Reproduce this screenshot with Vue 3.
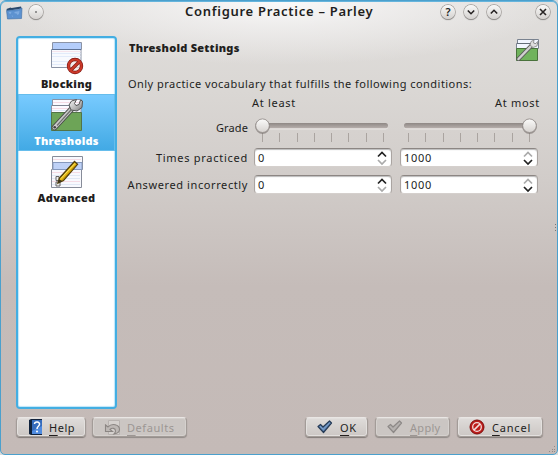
<script setup>
import { ref } from 'vue'

const pages = [
  { id: 'blocking', label: 'Blocking' },
  { id: 'thresholds', label: 'Thresholds' },
  { id: 'advanced', label: 'Advanced' },
]
const current = ref('thresholds')
const ticks = [8, 25, 43, 60, 77, 94, 112, 129]
const rows = [
  { id: 'times', label: 'Times practiced', low: 0, high: 1000 },
  { id: 'wrong', label: 'Answered incorrectly', low: 0, high: 1000 },
]
</script>

<template>
  <div class="backdrop">
    <div class="window">
      <header class="titlebar">
        <svg class="app-icon" width="17" height="14" viewBox="0 0 17 14">
          <path d="M.5 3l4-1.500 1 .5L15 .5l.5 2L1 5z" fill="#29486b" />
          <path d="M.5 4.500L12.500 3.500l3.500-1.500-.5 10.500-14 .5z" fill="#5d92d0" stroke="#3e6da5" stroke-width=".6" />
          <path d="M2.500 6l3-.3-.5 1.500-1 1zM8.500 6l5-1-.5 3-1.500 1-1-1.500-2-.3zM5.500 9.500l1.500.3-.5 1.500z" fill="#7eabe0" />
        </svg>
        <span class="round menu"><svg width="14" height="14" viewBox="0 0 14 14"><circle cx="7" cy="7" r="1" fill="#777" /></svg></span>
        <h1>Configure Practice – Parley</h1>
        <span class="round help">?</span>
        <span class="round down"><svg width="14" height="14" viewBox="0 0 14 14"><path d="M3.800 5.500L7 8.700l3.200-3.200" /></svg></span>
        <span class="round up"><svg width="14" height="14" viewBox="0 0 14 14"><path d="M3.800 8.500L7 5.300l3.200 3.200" /></svg></span>
        <span class="round close"><svg width="14" height="14" viewBox="0 0 14 14"><path d="M4 4l6 6M10 4l-6 6" /></svg></span>
      </header>

      <div class="body">
        <nav class="pages">
          <div v-for="p in pages" :key="p.id" class="page" :class="[p.id, { active: current === p.id }]" @click="current = p.id">
            <svg width="34" height="34" viewBox="0 0 34 34">
              <defs>
                <linearGradient id="metal" x1="0" y1="0" x2="1" y2="1">
                  <stop offset="0" stop-color="#fafafa" /><stop offset=".55" stop-color="#bbb" /><stop offset="1" stop-color="#777" />
                </linearGradient>
              </defs>
              <template v-if="p.id === 'blocking'">
                <path d="M2.500 1.500h29v7h-.5v18h-29.500v-18h1z" fill="#f8fafe" stroke="#8b93a5" />
                <path d="M3 2h28v6H3z" fill="#b4cdfa" />
                <path d="M2 8.500h29" stroke="#5e7295" />
                <path d="M2 12.500h28.500M2 15.500h28.500M2 20.500h28.500M2 23.500h28.500" stroke="#e2ebfa" />
                <path d="M2 10.500h28.500" stroke="#f5e4ec" />
                <circle cx="25" cy="25" r="6.500" fill="#f4e7e4" fill-opacity=".7" stroke="#7d1712" stroke-width="3.400" />
                <path d="M20.500 29.500l9-9" stroke="#7d1712" stroke-width="3.400" />
                <circle cx="25" cy="25" r="6.500" fill="none" stroke="#cb3929" stroke-width="2.200" />
                <path d="M20.500 29.500l9-9" stroke="#cb3929" stroke-width="2.200" />
              </template>
              <template v-else-if="p.id === 'thresholds'">
                <path d="M2.500 1.500h29v6h-.5v8h-29.500v-8h1z" fill="#fbfaff" stroke="#8b93a5" />
                <path d="M2 7.500h29" stroke="#7e8492" />
                <path d="M3 4.500h28M2 10.500h28" stroke="#f5dbe4" />
                <path d="M2 12.500h28" stroke="#dfe8f7" />
                <path d="M1.500 14.500h30v18h-30z" fill="#6da457" stroke="#527447" />
                <path d="M4.500 29.500L23 9.500" stroke="#4b4e4b" stroke-width="5.600" stroke-linecap="round" />
                <path d="M4.500 29.500L23 9.500" stroke="#c9cac9" stroke-width="4" stroke-linecap="round" />
                <path d="M26.500 1.500l-5 1.500-2.500 4 2 5 6 1 5-3.500.5-6.500-2-1-1.500 4.500-3 1-1.500-2z" fill="url(#metal)" stroke="#555" />
                <path d="M7 27.500L21 12" stroke="#6e706e" stroke-width="1.200" />
                <circle cx="4.700" cy="29.300" r="1.300" fill="#444" />
              </template>
              <template v-else>
                <path d="M2.500 1.500h30v13h-1v18h-30v-18h1z" fill="#f8f9fe" stroke="#878c99" />
                <path d="M3 7.500h29v7H3z" fill="#bfd2f7" stroke="#8599bd" />
                <path d="M3 4.500h28M2 17.500h28M2 26.500h28" stroke="#f5dbe4" />
                <path d="M2 20.500h28M2 23.500h28M2 29.500h28" stroke="#e0e8f5" />
                <path d="M6 21.500h3v4H6zM6 27h4v4H6z" fill="#eee" stroke="#666" />
                <path d="M9.500 23L24.500 6.500l3 2.800L13.500 25.500 8 28z" fill="#e4b913" stroke="#51400c" stroke-width="1.300" />
                <path d="M11 23.500L25 8.300" stroke="#fbe463" />
                <path d="M12.500 25L26.500 9.500" stroke="#b78905" />
                <path d="M8 28l1-3.500 3.500 1.500z" fill="#3b331d" />
              </template>
            </svg>
            <b>{{ p.label }}</b>
          </div>
        </nav>

        <main>
          <div class="heading">
            <h2>Threshold Settings</h2>
            <svg width="23" height="23" viewBox="0 0 23 23">
              <path d="M1.500.5h21v9h-22v-5h1z" fill="#f2f6ff" stroke="#7a8390" />
              <path d="M1 4.500h21" stroke="#646d78" />
              <path d="M.5 9.500h21v12H.5z" fill="#70b35c" stroke="#49723c" />
              <path d="M2.500 20L16 6" stroke="#5c5f5c" stroke-width="4" stroke-linecap="round" />
              <path d="M2.500 20L16 6" stroke="#d0d0d0" stroke-width="2.500" stroke-linecap="round" />
              <path d="M18 1l-3 1.500-1 3.500 3 2.500 4-1.500L22 2.500l-2.500 2-2-.5z" fill="#ddd" stroke="#777" stroke-width=".7" />
            </svg>
          </div>
          <p class="intro">Only practice vocabulary that fulfills the following conditions:</p>
          <div class="form">
            <span></span>
            <span class="col-head least">At least</span>
            <span class="col-head most">At most</span>

            <label class="grade">Grade</label>
            <svg v-for="x in [8.5, 129.5]" :key="x" class="slider" width="138" height="30" viewBox="0 0 138 30">
              <defs>
                <linearGradient id="groove" x1="0" y1="0" x2="0" y2="1"><stop offset="0" stop-color="#8e8784" /><stop offset="1" stop-color="#b7afac" /></linearGradient>
                <linearGradient id="knob" x1="0" y1="0" x2="0" y2="1"><stop offset="0" stop-color="#fbfbfa" /><stop offset="1" stop-color="#d6d2cf" /></linearGradient>
              </defs>
              <rect x="4" y="8" width="130" height="5.500" rx="2.700" fill="#e9e6e4" />
              <rect x="4" y="7" width="130" height="5.300" rx="2.600" fill="url(#groove)" />
              <path v-for="t in ticks" :key="t" :d="`M${t + .5} 17v9`" stroke="#aaa4a0" />
              <circle :cx="x" cy="10.500" r="7.400" fill="#77706d" fill-opacity=".6" />
              <circle :cx="x" cy="9.700" r="6.800" fill="url(#knob)" stroke="#928c89" stroke-width=".8" />
            </svg>

            <template v-for="r in rows" :key="r.id">
              <label :class="r.id">{{ r.label }}</label>
              <span v-for="(v, i) in [r.low, r.high]" :key="i" class="spin">
                <span>{{ v }}</span>
                <svg width="10" height="16" viewBox="0 0 10 16" fill="none" stroke-width="1.700">
                  <path d="M1 6.500l4-4 4 4" :stroke="i ? '#aaa' : '#222'" />
                  <path d="M1 10l4 4 4-4" :stroke="i ? '#222' : '#aaa'" />
                </svg>
              </span>
            </template>
          </div>
        </main>
      </div>

      <footer>
        <button class="btn b-help">
          <svg width="15" height="17" viewBox="0 0 15 17">
            <path d="M1 1l2-1h11v16H3l-2-1z" fill="#11233d" />
            <path d="M4 1h10v14H4z" fill="#4f8be0" /><path d="M4 1h10v6L4 12z" fill="#356cbd" />
            <path d="M6.500 5c.3-3 5.500-2.500 5 .5-.3 1.800-2.500 1.800-2.500 4.500" fill="none" stroke="#fff" stroke-width="1.500" />
            <circle cx="9" cy="12.500" r="1" fill="#fff" />
          </svg>
          <span><u>H</u>elp</span>
        </button>
        <button class="btn b-defaults" disabled>
          <svg width="17" height="17" viewBox="0 0 17 17">
            <path d="M4.500 1.500h11v14h-11z" fill="#d5d1ce" stroke="#b8b3b0" />
            <path d="M1.500 6v6.500H8.500L6 10.500c2-2 5.500-1.500 5.500 1.500 0 1-.5 2-1.500 3 3-.5 5.500-2 5.500-4.500C15.500 5 7.500 4 4 8z" fill="#bdb8b5" stroke="#8b8683" stroke-width="1.100" />
          </svg>
          <span><u>D</u>efaults</span>
        </button>
        <i class="spacer"></i>
        <button class="btn b-ok">
          <svg width="16" height="14" viewBox="0 0 16 14"><path d="M1 6.500L3.500 4.500 6 7l6.500-6L14.500 3 6.500 12.500z" fill="#6087b8" stroke="#263b56" stroke-width="1.200" stroke-linejoin="round" /><path d="M3 6.300l3.200 3L12.500 3" fill="none" stroke="#83a5ce" /></svg>
          <span><u>O</u>K</span>
        </button>
        <button class="btn b-apply" disabled>
          <svg width="16" height="14" viewBox="0 0 16 14"><path d="M1 6.500L3.500 4.500 6 7l6.500-6L14.500 3 6.500 12.500z" fill="#b5b1af" stroke="#8d8987" stroke-width="1.200" stroke-linejoin="round" /></svg>
          <span><u>A</u>pply</span>
        </button>
        <button class="btn b-cancel">
          <svg width="16" height="16" viewBox="0 0 16 16"><circle cx="8" cy="8" r="7" fill="#bd1d1b" stroke="#7f0e0d" /><circle cx="8" cy="8" r="4.300" fill="#bd1d1b" stroke="#f3dedc" stroke-width="1.300" /><path d="M5 11l6-6" stroke="#f3dedc" stroke-width="1.700" /></svg>
          <span><u>C</u>ancel</span>
        </button>
      </footer>
      <svg class="grip" width="7" height="7" viewBox="0 0 7 7" fill="#908987"><path d="M5 0h1v1H5zM3 3h1v1H3zM5 3h1v1H5zM0 5h1v1H0zM3 5h1v1H3zM5 5h1v1H5z" /></svg>
      <svg class="edge" width="2" height="9" viewBox="0 0 2 9" fill="#777"><path d="M0 0h1v1H0zM0 3h1v1H0zM0 6h1v1H0z" /></svg>
    </div>
  </div>
</template>

<style>
body { margin: 0; }
</style>

<style scoped>
* { box-sizing: border-box; }
.backdrop { width: 558px; height: 455px; background: #d9dbdc; font-family: "Noto Sans", "Open Sans", sans-serif; font-size: 11px; color: #221e1d; }
.window { position: relative; display: flex; flex-direction: column; width: 558px; height: 455px; border: 1px solid #4ba0cd; border-radius: 6px 6px 5px 5px; box-shadow: inset 0 1px #65b4dc; overflow: hidden;
  background: radial-gradient(ellipse 280px 64px at 50% 0, #fafafa 0, #f5f4f4aa 40%, #e2e0de00 100%), linear-gradient(#e1dfdd 0, #dad7d4 90px, #d1ccc9 180px, #c5bcb9 285px, #c4bab7 100%); }
.titlebar { display: flex; align-items: center; height: 20px; flex: none; padding: 0 7px 0 5px; }
.app-icon { margin-top: 3px; }
.round { display: grid; place-items: center; width: 14px; height: 14px; margin-top: 1px; flex: none; border-radius: 50%; background: linear-gradient(#f9f9f8, #d5d2d0); box-shadow: 0 0 0 .7px #9a9693, 0 1px 1px #777; font-size: 11px; font-weight: 600; line-height: 14px; }
.round svg path { fill: none; stroke: #292525; stroke-width: 1.600; }
.menu { margin-left: 6px; }
h1 { margin: 0; flex: 1; padding-left: 142px; font-size: 13px; font-weight: 600; white-space: nowrap; line-height: 20px; letter-spacing: .71px; }
.down, .up { margin-left: 9px; }
.close { margin-left: 35px; }
.body { display: flex; flex: none; height: 373px; margin-top: 15px; padding: 0 20px 0 15px; }
.pages { width: 101px; height: 373px; flex: none; border: 2px solid #43aee2; border-radius: 4px; background: #fff; box-shadow: inset 0 0 1px 1px #bde6fa; }
.page { display: flex; flex-direction: column; align-items: center; height: 57px; padding-top: 4px; white-space: nowrap; }
.page:first-child { height: 56px; padding-top: 3px; }
.page b { font-weight: 900; font-size: 11px; line-height: 15px; margin-top: 1px; letter-spacing: .25px; }
.page.active { background: linear-gradient(#79cbff, #41a9e4); color: #fff; box-shadow: inset 0 0 0 1px #66bdec; }
main { flex: 1; padding-left: 12px; min-width: 0; }
.heading { display: flex; justify-content: space-between; height: 38px; padding-top: 3px; margin-right: -2px; }
h2 { margin: 0; font-size: 11px; font-weight: 900; line-height: 17px; letter-spacing: .25px; }
.intro { margin: 1px 0 0 -1px; line-height: 17px; white-space: nowrap; letter-spacing: .465px; }
.form { display: grid; grid-template-columns: 120px 138px 138px; column-gap: 8px; grid-template-rows: 21px 35px 27px 20px; margin-left: -3px; }
label { text-align: right; white-space: nowrap; line-height: 19px; height: 20px; margin-right: -2px; }
.times { letter-spacing: .73px; }
.wrong { letter-spacing: .6px; }
.col-head { line-height: 22px; letter-spacing: .7px; margin-left: -2px; }
.col-head.most { text-align: right; margin-right: -2px; }
.grade { padding-top: 5px; letter-spacing: .1px; }
.slider { display: block; margin-top: 3px; }
.spin { display: flex; align-items: center; justify-content: space-between; height: 19px; padding: 0 4px 0 3px; border: 1px solid #aaa4a1; border-top-color: #8c8683; border-bottom-color: #d5d0cd; border-radius: 4px; background: #fff; box-shadow: inset 0 1px 1px #bbb; letter-spacing: .7px; }
footer { display: flex; flex: none; height: 21px; margin-top: 8px; padding: 0 14px 0 15px; }
.btn { display: flex; align-items: center; gap: 6px; height: 20px; border: 1px solid #a39c98; border-top-color: #e9e6e4; border-radius: 4px; background: linear-gradient(#dfdcda, #ccc7c4); box-shadow: 0 1px 1px #817a77, inset 0 0 0 1px #e3e0de; padding: 0 0 0 11px; font: inherit; color: inherit; white-space: nowrap; letter-spacing: .55px; }
.btn:disabled { color: #9c9693; background: #cbc6c3; box-shadow: 0 1px 1px #918b88, inset 0 0 0 1px #d5d1ce; }
.btn u { text-underline-offset: 3px; text-decoration-thickness: 1px; }
.b-help { width: 70px; }
.b-defaults { width: 95px; margin-left: 6px; }
.spacer { flex: 1; }
.b-ok { width: 63px; gap: 7px; }
.b-apply { width: 75px; margin-left: 7px; gap: 7px; letter-spacing: .3px; }
.b-cancel { width: 86px; margin-left: 7px; gap: 7px; letter-spacing: .8px; }
.grip { position: absolute; right: 1px; bottom: 1px; }
.edge { position: absolute; right: 0; top: 223px; }
</style>
